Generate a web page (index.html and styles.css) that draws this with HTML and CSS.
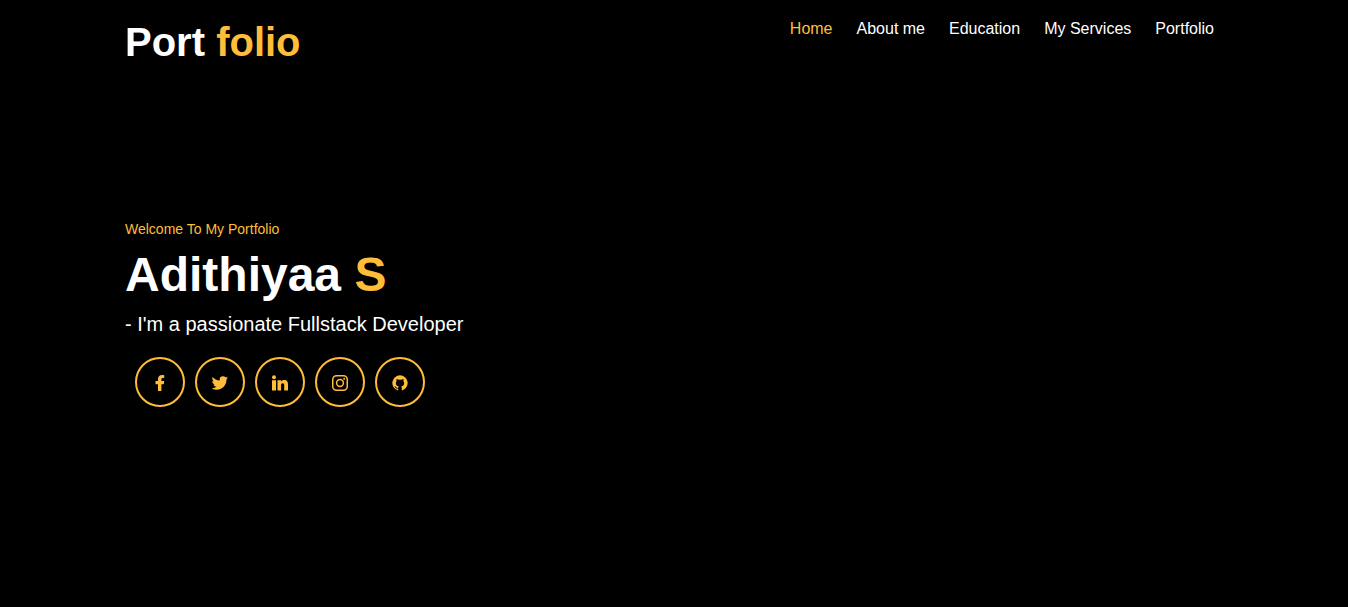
FILE: index.html
```html
<!DOCTYPE html>
<html lang="en">
<head>
<meta charset="utf-8">
<meta name="viewport" content="width=device-width, initial-scale=1">
<title>Portfolio</title>
<link rel="stylesheet" href="styles.css">
</head>
<body>
<header class="container header">
  <a class="logo" href="#">Port <span class="accent">folio</span></a>
  <nav class="nav">
    <a class="nav-link accent" href="#home">Home</a>
    <a class="nav-link" href="#about">About me</a>
    <a class="nav-link" href="#education">Education</a>
    <a class="nav-link" href="#services">My Services</a>
    <a class="nav-link" href="#portfolio">Portfolio</a>
  </nav>
</header>
<main class="container hero" id="home">
  <p class="welcome accent">Welcome To My Portfolio</p>
  <h1 class="name">Adithiyaa <span class="accent">S</span></h1>
  <p class="role">- I'm a passionate Fullstack Developer</p>
  <div class="social">
    <a class="social-link" href="#" aria-label="Facebook"><svg class="icon" viewBox="0 0 16 16"><path d="M6 16V9.200H3.500V6H6V4.200C6 1.500 7.500 0 10.200 0c.8 0 1.500.1 2 .2v2.800h-1.300c-1.200 0-1.500.6-1.500 1.500V6h2.800l-.4 3.200H9.400V16z"/></svg></a>
    <a class="social-link" href="#" aria-label="Twitter"><svg class="icon" viewBox="2.500 2.500 19 19"><path d="M19.633 7.997c.013.175.013.349.013.523 0 5.325-4.053 11.461-11.46 11.461-2.282 0-4.402-.661-6.186-1.809.324.037.636.05.973.05a8.07 8.07 0 0 0 5.001-1.721 4.036 4.036 0 0 1-3.767-2.793c.249.037.499.062.761.062.361 0 .724-.05 1.061-.137a4.027 4.027 0 0 1-3.23-3.953v-.05c.537.299 1.16.486 1.82.511a4.022 4.022 0 0 1-1.796-3.354c0-.748.199-1.434.548-2.032a11.457 11.457 0 0 0 8.306 4.215c-.062-.3-.1-.611-.1-.923a4.026 4.026 0 0 1 4.028-4.028c1.16 0 2.207.486 2.943 1.272a7.957 7.957 0 0 0 2.556-.973 4.02 4.02 0 0 1-1.771 2.22 8.073 8.073 0 0 0 2.319-.624 8.645 8.645 0 0 1-2.019 2.083z"/></svg></a>
    <a class="social-link" href="#" aria-label="LinkedIn"><svg class="icon" viewBox="0 0 16 16"><circle cx="2" cy="2.300" r="2"/><path d="M0 5.200h4V15.500H0zM5.500 5.200h3.600v1.400c.5-.9 1.500-1.600 3-1.600 3.100 0 3.900 2 3.900 4.800v5.700h-3.800v-4.900c0-1.300-.1-2.400-1.500-2.400s-1.600 1.100-1.600 2.400v4.900H5.500z"/></svg></a>
    <a class="social-link" href="#" aria-label="Instagram"><svg class="icon line" viewBox="0 0 16 16"><rect x=".75" y=".75" width="14.500" height="14.500" rx="3.800"/><circle cx="8" cy="8" r="3.400"/><circle class="dot" cx="12.200" cy="3.800" r="1"/></svg></a>
    <a class="social-link" href="#" aria-label="GitHub"><svg class="icon" viewBox="0 0 16 16"><path d="M8 .3A7.700 7.700 0 0 0 5.600 15.300C6 15.400 6.200 15.200 6.200 14.900V13.600C4 14 3.400 13 3.200 12.300 3 11.900 2.700 11.500 2.300 11.300 3.200 11 3.800 11.600 4.200 12.200 4.800 13 5.600 13 6.300 12.800 6.400 12.300 6.500 11.900 6.800 11.600 5 11.300 3.900 10.200 3.900 8.100 3.900 7.200 4.100 6.500 4.600 6 4.400 5.400 4.400 4.700 4.700 4 5.500 4.100 6 4.400 6.500 4.800A8 8 0 0 1 9.500 4.800C10 4.400 10.500 4.100 11.300 4 11.600 4.700 11.600 5.400 11.400 6 11.900 6.500 12.100 7.200 12.100 8.100 12.100 10.200 11 11.300 9.200 11.600 9.600 12 9.800 12.500 9.800 13.100V14.900C9.800 15.200 10 15.400 10.400 15.300A7.700 7.700 0 0 0 8 .3z"/></svg></a>
  </div>
</main>
</body>
</html>
```

FILE: styles.css
```css
* {
  box-sizing: border-box;
  margin: 0;
  padding: 0;
}

body {
  min-height: 100vh;
  display: flex;
  flex-direction: column;
  background: #000;
  color: #fff;
  font-family: Arial, "Liberation Sans", sans-serif;
  font-size: 16px;
}

a {
  color: inherit;
  text-decoration: none;
}

.container {
  width: 100%;
  max-width: 1098px;
  margin: 0 auto;
}

.header {
  display: flex;
  flex-wrap: wrap;
  justify-content: space-between;
  align-items: flex-start;
  padding: 18px 9px 0 0;
}

.logo {
  font-size: 40px;
  font-weight: 700;
  line-height: 48px;
}

.nav {
  display: flex;
  flex-wrap: wrap;
  gap: 24px;
}

.nav-link {
  line-height: 22px;
}

.accent {
  color: #ffbd39;
}

.hero {
  flex: 1;
  display: flex;
  flex-direction: column;
  justify-content: center;
  padding-bottom: 48px;
}

.welcome {
  font-size: 14px;
  line-height: 20px;
}

.name {
  margin-top: 8px;
  font-size: 48px;
  line-height: 56px;
}

.role {
  margin-top: 9px;
  font-size: 20px;
  line-height: 24px;
}

.social {
  display: flex;
  flex-wrap: wrap;
  gap: 10px;
  margin-top: 21px;
  padding-left: 10px;
}

.social-link {
  display: flex;
  align-items: center;
  justify-content: center;
  width: 50px;
  height: 50px;
  padding-top: 2px;
  border: 2px solid #ffbd39;
  border-radius: 50%;
  color: #ffbd39;
}

.icon {
  width: 16px;
  height: 16px;
  fill: currentColor;
}

.line {
  fill: none;
  stroke: currentColor;
  stroke-width: 1.5;
}

.dot {
  fill: currentColor;
  stroke: none;
}
```
